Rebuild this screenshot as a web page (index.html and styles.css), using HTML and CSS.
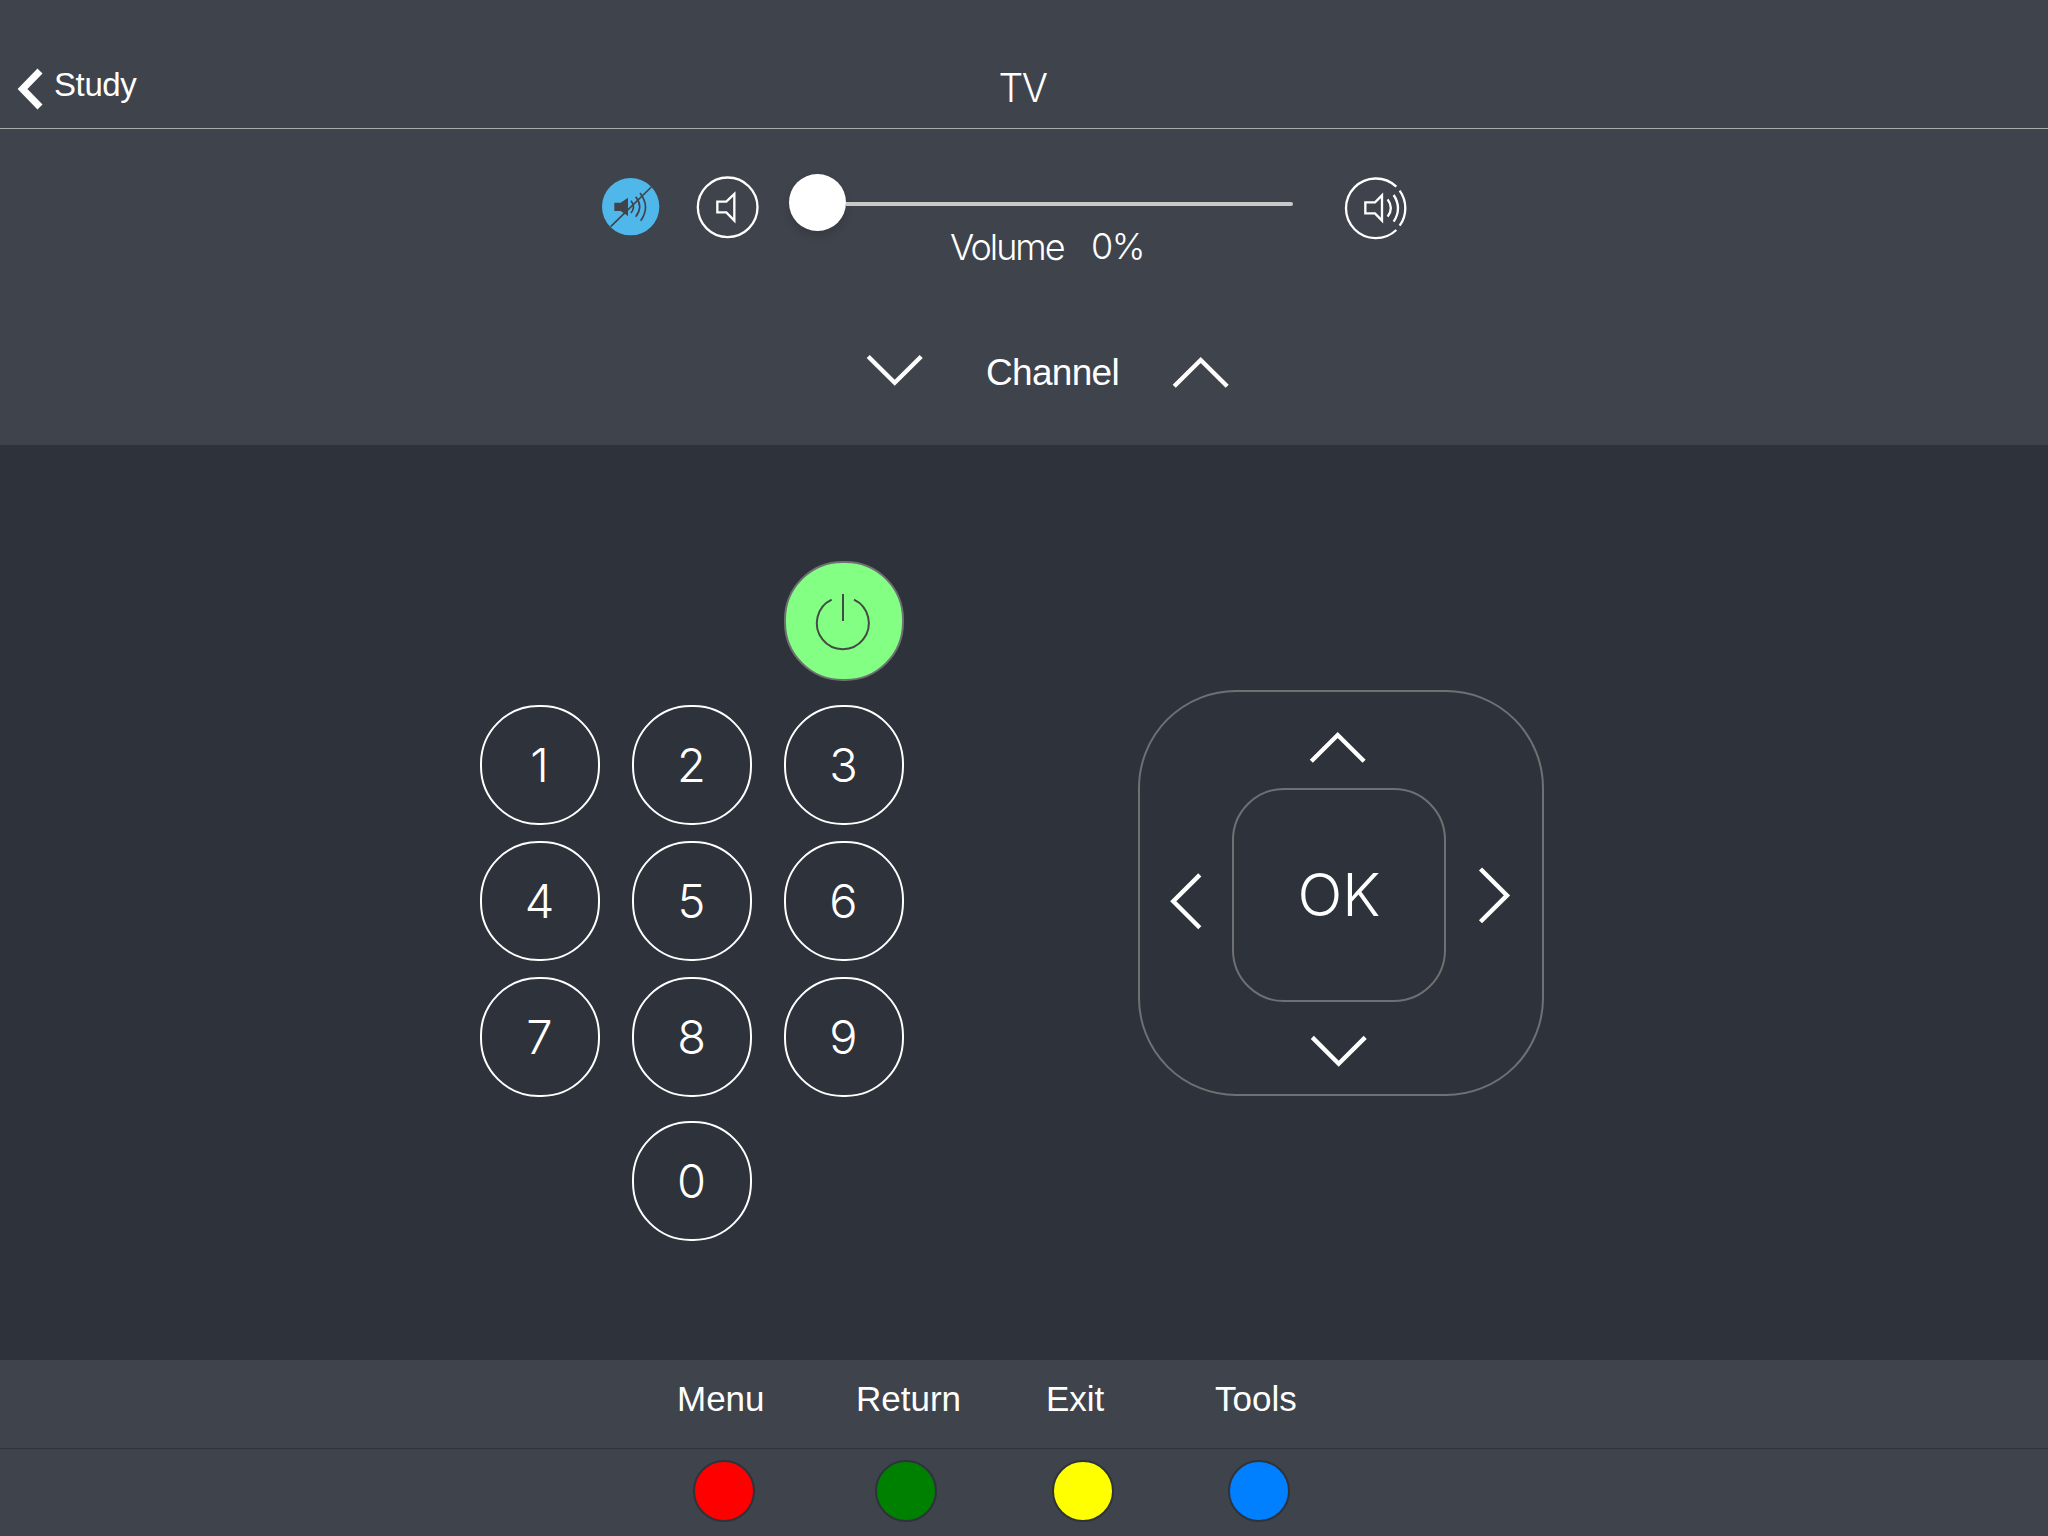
FILE: index.html
```html
<!DOCTYPE html>
<html lang="en">
<head>
<meta charset="utf-8">
<title>TV</title>
<link rel="stylesheet" href="styles.css">
</head>
<body>
<header class="header">
  <a class="back">
    <svg class="back-icon" width="26" height="42" viewBox="17 68 26 42"><path d="M40 71 22.500 89 40 107"/></svg>
    <span class="back-label">Study</span>
  </a>
  <h1 class="title">TV</h1>
</header>

<section class="controls">
  <div class="volume">
    <svg class="mute" width="80" height="80" viewBox="0 0 240 240">
      <circle class="mute-disc" cx="122" cy="110" r="86"/>
      <path class="mute-speaker" d="M73 98H92L114 83V138L92 123H73Z"/>
      <path class="mute-line" d="M62 170 184 51M123 92Q138 111 123 129M137 80Q161 110 137 140M150 69Q182 111 152 152"/>
    </svg>
    <svg class="speaker" width="80" height="80" viewBox="324 21 240 240">
      <circle cx="443" cy="142" r="89.500"/>
      <path d="M412 125H439L463 102V182L439 157H412Z"/>
    </svg>
    <div class="slider">
      <div class="slider-bar">
        <span class="knob"></span>
        <span class="track"></span>
      </div>
      <div class="readout"><span class="readout-name">Volume</span><span class="readout-value">0%</span></div>
    </div>
    <svg class="speaker loud" width="80" height="80" viewBox="0 0 240 240">
      <path d="M184 50A89.500 89.500 0 1 0 184 180M194 62A90 90 0 0 1 194 167M176 75Q202 115 176 155M158 88Q177 114 158 140"/>
      <path d="M91 97H120L141 76V152L120 130H91Z"/>
    </svg>
  </div>
  <div class="channel">
    <svg class="chevron" width="70" height="50" viewBox="860 345 70 50"><path d="M868.200 356.500 894.700 382.700 921.200 356.500"/></svg>
    <span class="channel-label">Channel</span>
    <svg class="chevron" width="70" height="50" viewBox="1166 345 70 50"><path d="M1174.200 386.200 1200.700 360 1227.200 386.200"/></svg>
  </div>
</section>

<main class="remote">
  <div class="keypad">
    <button class="key power" aria-label="Power">
      <svg width="116" height="116" viewBox="78 69 348 348"><path d="M215 179A78 78 0 1 0 282 179M249 162V243"/></svg>
    </button>
    <button class="key">1</button><button class="key">2</button><button class="key">3</button>
    <button class="key">4</button><button class="key">5</button><button class="key">6</button>
    <button class="key">7</button><button class="key">8</button><button class="key">9</button>
    <button class="key zero">0</button>
  </div>
  <div class="dpad">
    <svg class="chevron up" width="214" height="96" viewBox="1232 692 214 96"><path d="M1311.300 761.300 1337.700 735 1364.100 761.300"/></svg>
    <svg class="chevron left" width="92" height="214" viewBox="1140 788 92 214"><path d="M1199.800 874.900 1173.300 901.300 1199.800 927.700"/></svg>
    <button class="ok">OK</button>
    <svg class="chevron right" width="96" height="214" viewBox="1446 788 96 214"><path d="M1480.500 869 1507 895.400 1480.500 921.800"/></svg>
    <svg class="chevron down" width="214" height="92" viewBox="1232 1002 214 92"><path d="M1312.300 1037.400 1338.700 1063.700 1365.200 1037.400"/></svg>
  </div>
</main>

<footer class="footer">
  <nav class="menu">
    <span class="menu-item menu-main">Menu</span>
    <span class="menu-item menu-return">Return</span>
    <span class="menu-item menu-exit">Exit</span>
    <span class="menu-item menu-tools">Tools</span>
  </nav>
  <div class="dots">
    <span class="dot red"></span>
    <span class="dot green"></span>
    <span class="dot yellow"></span>
    <span class="dot blue"></span>
  </div>
</footer>
</body>
</html>
```

FILE: styles.css
```css
* { box-sizing: border-box; }

body {
  margin: 0;
  width: 2048px;
  height: 1536px;
  display: flex;
  flex-direction: column;
  background: #3f434b;
  color: #fff;
  font-family: "Liberation Sans", Arial, sans-serif;
}

svg { display: block; flex: none; fill: none; stroke: #fff; }

button {
  margin: 0;
  padding: 0;
  background: none;
  color: inherit;
}

.header {
  height: 129px;
  border-bottom: 1px solid #a9aaab;
  display: grid;
  grid-template-columns: 1fr auto 1fr;
}

.back { display: flex; padding: 68px 0 0 17px; }
.back-icon { stroke-width: 7; }
.back-label { margin: -2px 0 0 11px; font-size: 33px; line-height: 38px; letter-spacing: -.4px; }

.title {
  margin: 64px 0 0;
  padding-right: 3px;
  font: 300 39px/48px Inter, "Liberation Sans", sans-serif;
  letter-spacing: -1.500px;
}

.controls { height: 316px; padding-top: 38px; }

.volume { height: 178px; display: flex; padding-left: 590px; }
.mute { margin-top: 3px; stroke: none; }
.mute-disc { fill: #50b7eb; }
.mute-speaker { fill: #3f434b; }
.mute-line { stroke: #3f434b; stroke-width: 5; }
.speaker { margin-left: 18px; stroke-width: 7; }
.loud { margin: 3px 0 0 41px; }

.slider { width: 504px; margin: 7px 1px 0 21px; }
.slider-bar { display: flex; align-items: center; height: 57px; }
.knob {
  width: 57px;
  height: 57px;
  border-radius: 50%;
  background: #fff;
  box-shadow: 0 5px 8px rgba(0, 0, 0, .14);
}
.track { flex: 1; height: 4px; margin-top: 3px; border-radius: 0 2px 2px 0; background: #c8cac8; }

.readout {
  display: flex;
  margin-top: -6px;
  padding-left: 161px;
  font: 300 36px/44px Inter, "Liberation Sans", sans-serif;
}
.readout-name { width: 141px; letter-spacing: -2px; }
.readout-value { margin-top: -1px; letter-spacing: -1.500px; }

.channel { display: flex; padding-left: 860px; }
.chevron { stroke-width: 4.400; }
.channel-label { width: 236px; padding: 1px 0 0 56px; font-size: 37px; line-height: 54px; letter-spacing: -.7px; }

.remote {
  height: 915px;
  padding: 116px 0 0 480px;
  display: flex;
  align-items: flex-start;
  background: #2e323a;
}

.keypad {
  display: grid;
  grid-template-columns: repeat(3, 120px);
  gap: 16px 32px;
}
.key {
  width: 120px;
  height: 120px;
  padding: 0 1px 1px 0;
  border: 2px solid #fff;
  border-radius: 58.500px;
  font: 300 47px/115px Inter, "Liberation Sans", sans-serif;
  text-align: center;
}
.power {
  grid-column: 3;
  margin-bottom: 8px;
  padding: 0;
  border-color: #6f7073;
  background: #83ff83;
}
.power svg { stroke: #444a46; stroke-width: 6; }
.zero { grid-column: 2; margin-top: 8px; }

.dpad {
  width: 406px;
  height: 406px;
  margin: 129px 0 0 234px;
  border: 2px solid #6f7073;
  border-radius: 98px;
  display: grid;
  grid-template:
    ". up ." 96px
    "left ok right" 214px
    ". down ." 92px
    / 92px 214px 96px;
}
.up { grid-area: up; }
.down { grid-area: down; }
.left { grid-area: left; }
.right { grid-area: right; }
.ok {
  grid-area: ok;
  border: 2px solid #6f7073;
  border-radius: 52px;
  font: 300 59px/210px Inter, "Liberation Sans", sans-serif;
}

.footer { height: 176px; }
.menu {
  display: flex;
  height: 89px;
  padding: 19px 0 0 677px;
  border-bottom: 1px solid #2e323a;
  font-size: 35px;
  line-height: 40px;
}
.menu-main { width: 179px; }
.menu-return { width: 190px; }
.menu-exit { width: 169px; }

.dots { display: flex; padding: 11px 0 0 693px; }
.dot { width: 62px; height: 62px; border: 2px solid #2e323a; border-radius: 50%; }
.red { background: #f00; }
.green { margin-left: 120px; background: #008000; }
.yellow { margin-left: 115px; background: #ff0; }
.blue { margin-left: 114px; background: #007fff; }
```
